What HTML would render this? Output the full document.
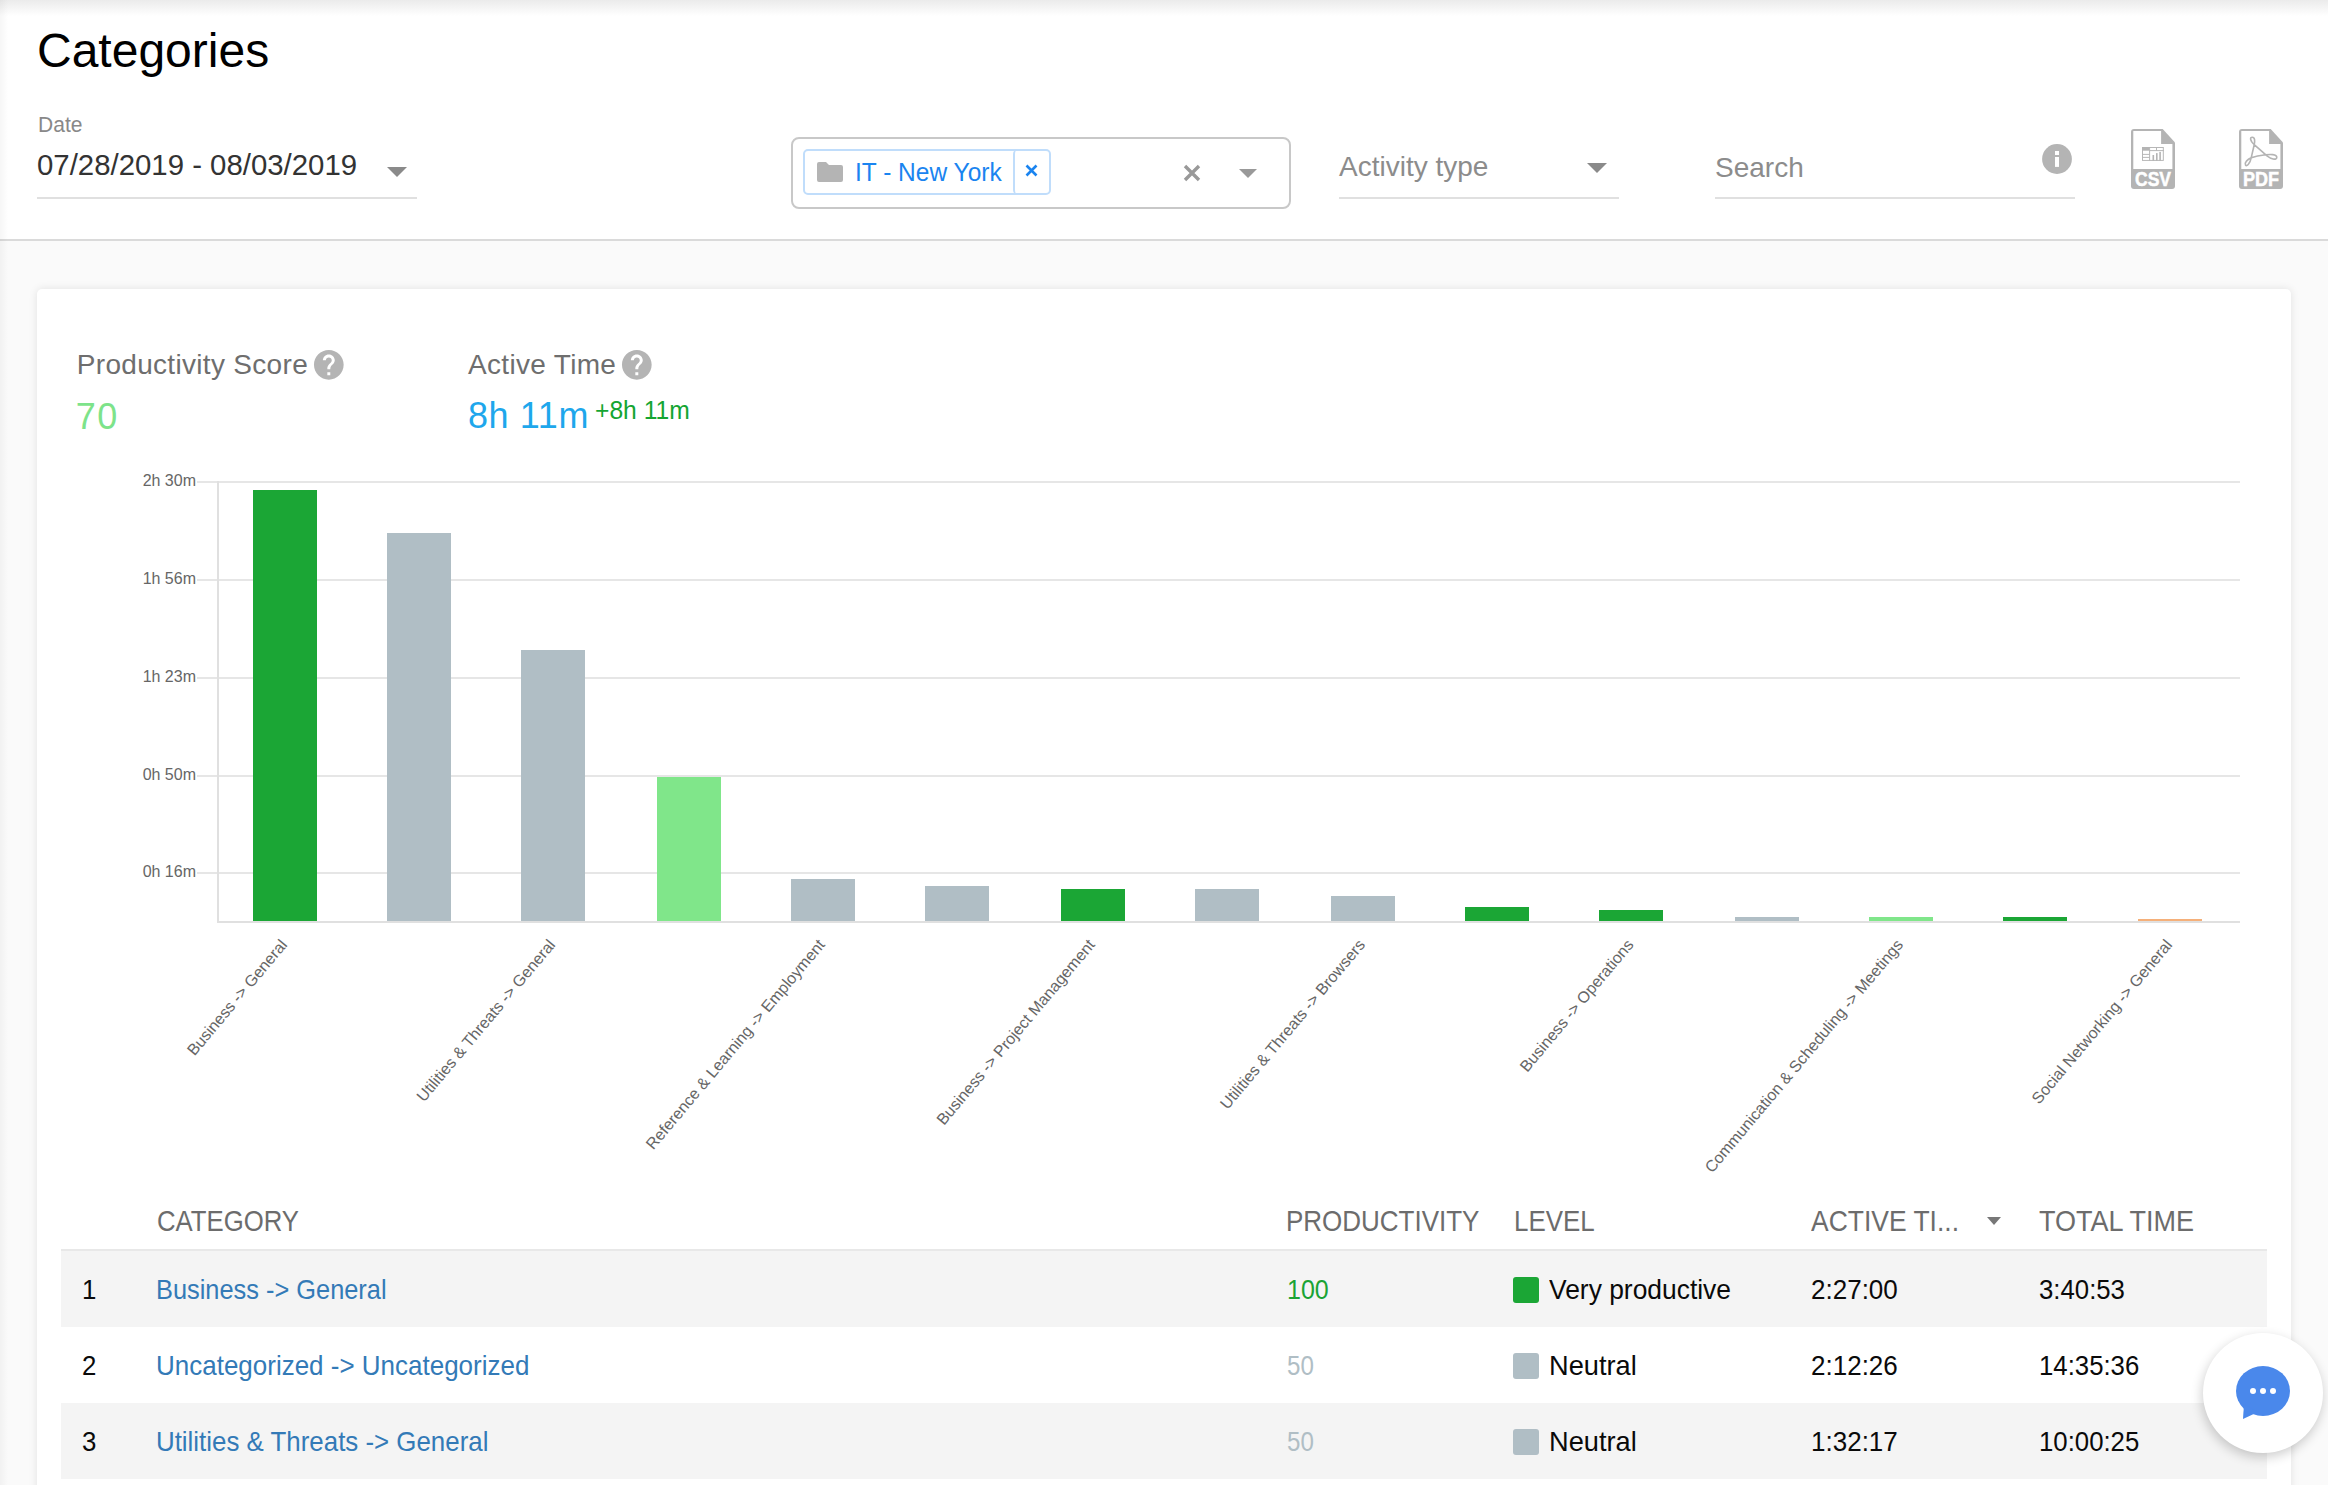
<!DOCTYPE html>
<html><head><meta charset="utf-8">
<style>
*{box-sizing:border-box;margin:0;padding:0}
html,body{width:2328px;height:1485px;overflow:hidden}
body{background:#fafafa;font-family:"Liberation Sans",sans-serif;position:relative}
.a{position:absolute;white-space:nowrap;line-height:1}
#hdr{position:absolute;left:0;top:0;width:2328px;height:241px;background:#fff;border-bottom:2px solid #dadada}
#topsh{position:absolute;left:0;top:0;width:2328px;height:16px;background:linear-gradient(#ebebeb,rgba(255,255,255,0))}
#leftsh{position:absolute;left:0;top:0;width:8px;height:1485px;background:linear-gradient(90deg,rgba(0,0,0,0.035),rgba(0,0,0,0))}
#card{position:absolute;left:37px;top:289px;width:2254px;height:1300px;background:#fff;border-radius:5px;box-shadow:0 0 8px rgba(0,0,0,0.1)}
.uline{position:absolute;height:2px;background:#e0e0e0}
.caret{position:absolute;width:0;height:0;border-left:10px solid transparent;border-right:10px solid transparent;border-top:10px solid #8a8a8a}
.q{position:absolute;width:30px;height:30px;border-radius:50%;background:#b4b4b4;color:#fff;font-size:24px;font-weight:bold;line-height:30px;text-align:center}
.grid{position:absolute;left:197px;width:2043px;height:2px;background:#e6e6e6}
.yl{position:absolute;right:2132px;font-size:16px;line-height:16px;color:#666;white-space:nowrap}
.bar{position:absolute;width:64px}
.g{background:#1ba635}.n{background:#b0bec5}.l{background:#80e68a}.o{background:#f5b07a}
.xl{position:absolute;top:932.46px;font-size:16px;line-height:16px;color:#666;white-space:nowrap;transform-origin:100% 13.54px;transform:rotate(-50deg)}
.row{position:absolute;left:61px;width:2206px;height:76px}
.sq{position:absolute;left:1513px;width:26px;height:26px;border-radius:3px}
</style></head>
<body>
<div id="hdr">
<div class="a" style="left:37px;top:27.07px;font-size:48px;color:#000;">Categories</div>
<div class="a" style="left:38px;top:114.08px;font-size:22px;color:#888;transform:scaleX(0.9560);transform-origin:0 0;">Date</div>
<div class="a" style="left:36.8px;top:150.75px;font-size:29px;color:#333;transform:scaleX(1.0128);transform-origin:0 0;">07/28/2019 - 08/03/2019</div>
<div class="caret" style="left:387px;top:167px"></div>
<div class="uline" style="left:37px;top:197px;width:380px"></div>
<div class="a" style="left:791px;top:137px;width:500px;height:72px;border:2px solid #c8c8c8;border-radius:8px"></div>
<div class="a" style="left:803px;top:149px;width:248px;height:46px;border:2px solid #c0ddfb;border-radius:5px"></div>
<div class="a" style="left:1013px;top:149px;width:8px;height:46px;border-left:2px solid #c0ddfb;border-radius:5px 0 0 5px"></div>
<svg class="a" style="left:817px;top:161px" width="26" height="22" viewBox="0 0 26 22"><path d="M2 1h7l3 3h12a2 2 0 0 1 2 2v13a2 2 0 0 1-2 2H2a2 2 0 0 1-2-2V3a2 2 0 0 1 2-2z" fill="#b4b4b4"/></svg>
<div class="a" style="left:855px;top:159.07px;font-size:26.5px;color:#1a84f0;transform:scaleX(0.9250);transform-origin:0 0;">IT - New York</div>
<svg class="a" style="left:1025px;top:164px" width="13" height="13" viewBox="0 0 13 13"><path d="M1.5 1.5l10 10M11.5 1.5l-10 10" stroke="#1a84f0" stroke-width="2.6"/></svg>
<svg class="a" style="left:1183px;top:164px" width="18" height="18" viewBox="0 0 18 18"><path d="M2 2l14 14M16 2L2 16" stroke="#999" stroke-width="3.4"/></svg>
<div class="caret" style="left:1239px;top:169px;border-top-color:#999;border-left-width:9.7px;border-right-width:9.7px;border-top-width:9.7px"></div>
<div class="a" style="left:1339px;top:153.40px;font-size:28px;color:#8c8c8c;">Activity type</div>
<div class="caret" style="left:1587px;top:163px"></div>
<div class="uline" style="left:1339px;top:197px;width:280px"></div>
<div class="a" style="left:1715px;top:153.50px;font-size:28px;color:#8c8c8c;">Search</div>
<div class="uline" style="left:1715px;top:197px;width:360px"></div>
<svg class="a" style="left:2042px;top:144px" width="30" height="30" viewBox="-15 -15 30 30"><circle r="14.9" fill="#b4b4b4"/><rect x="-2" y="-8" width="4" height="4" fill="#fff"/><rect x="-2" y="-2" width="4" height="9.9" fill="#fff"/></svg>
<svg class="a" style="left:2131px;top:129px" width="44" height="60" viewBox="0 0 44 60"><path d="M3 0h28.7l12.3 13.4V57a3 3 0 0 1-3 3H3a3 3 0 0 1-3-3V3a3 3 0 0 1 3-3z" fill="#b4b4b4"/><path d="M2.3 2h27.8v13h11.3v24.9H2.3z" fill="#fff"/>
<g fill="none" stroke="#b4b4b4" stroke-width="0.95"><rect x="11.5" y="18.5" width="20.8" height="12.9"/><path d="M18.6 18v13.8M18.6 21.6H32.8M25.5 18v3.6M11.1 25.4h7.5M11.1 28.4h7.5"/></g><g fill="#b4b4b4"><rect x="11.1" y="18" width="7.3" height="3.7"/><rect x="21.5" y="26" width="1.6" height="5.8"/><rect x="25" y="24.1" width="1.6" height="7.7"/><rect x="28.3" y="22.9" width="1.6" height="8.9"/></g>
<text x="4" y="56.5" font-family="Liberation Sans" font-weight="bold" font-size="20" fill="#fff" stroke="#fff" stroke-width="0.5" textLength="36" lengthAdjust="spacingAndGlyphs">CSV</text></svg>
<svg class="a" style="left:2239px;top:129px" width="44" height="60" viewBox="0 0 44 60"><path d="M3 0h28.7l12.3 13.4V57a3 3 0 0 1-3 3H3a3 3 0 0 1-3-3V3a3 3 0 0 1 3-3z" fill="#b4b4b4"/><path d="M2.3 2h27.8v13h11.3v24.9H2.3z" fill="#fff"/>
<path d="M15.2 15.7C16 12 16 8.2 13.3 8.2C10.6 8.2 11 11.8 15.2 15.7L28 26.8C31.5 29.5 37.8 32 37.8 28.3C37.8 25 31 25.3 26.5 25.8C21 26.4 15.5 27.6 12.2 28.8C8.5 30.5 5.2 33.5 6.5 36C7.8 38 11 34.5 12.2 28.8L15.2 15.7" fill="none" stroke="#b4b4b4" stroke-width="1.6" stroke-linejoin="round"/>
<text x="4" y="56.5" font-family="Liberation Sans" font-weight="bold" font-size="20" fill="#fff" stroke="#fff" stroke-width="0.5" textLength="36" lengthAdjust="spacingAndGlyphs">PDF</text></svg>
</div>
<div id="topsh"></div><div id="leftsh"></div><div id="card"></div>
<div class="a" style="left:76.8px;top:351.40px;font-size:28px;color:#6e6e6e;letter-spacing:0.31px;">Productivity Score</div>
<svg class="a" style="left:311.18px;top:347.18px" width="35.64" height="35.64" viewBox="0 0 24 24"><path d="M12 2C6.48 2 2 6.48 2 12s4.48 10 10 10 10-4.48 10-10S17.52 2 12 2zm1 17h-2v-2h2v2zm2.07-7.75l-.9.92C13.45 12.9 13 13.5 13 15h-2v-.5c0-1.1.45-2.1 1.17-2.83l1.24-1.26c.37-.36.59-.86.59-1.41 0-1.1-.9-2-2-2s-2 .9-2 2H8c0-2.21 1.79-4 4-4s4 1.79 4 4c0 .88-.36 1.68-.93 2.25z" fill="#b4b4b4"/></svg>
<div class="a" style="left:75.8px;top:398.53px;font-size:36px;color:#7de38a;letter-spacing:1.5px;">70</div>
<div class="a" style="left:468px;top:351.30px;font-size:28px;color:#6e6e6e;letter-spacing:0.32px;">Active Time</div>
<svg class="a" style="left:619.18px;top:347.18px" width="35.64" height="35.64" viewBox="0 0 24 24"><path d="M12 2C6.48 2 2 6.48 2 12s4.48 10 10 10 10-4.48 10-10S17.52 2 12 2zm1 17h-2v-2h2v2zm2.07-7.75l-.9.92C13.45 12.9 13 13.5 13 15h-2v-.5c0-1.1.45-2.1 1.17-2.83l1.24-1.26c.37-.36.59-.86.59-1.41 0-1.1-.9-2-2-2s-2 .9-2 2H8c0-2.21 1.79-4 4-4s4 1.79 4 4c0 .88-.36 1.68-.93 2.25z" fill="#b4b4b4"/></svg>
<div class="a" style="left:468px;top:398.43px;font-size:36px;color:#1ea7ec;letter-spacing:0.6px;">8h 11m</div>
<div class="a" style="left:594.6px;top:397.49px;font-size:26px;color:#14a532;transform:scaleX(0.9480);transform-origin:0 0;">+8h 11m</div>
<div class="grid" style="top:481px"></div>
<div class="grid" style="top:579px"></div>
<div class="grid" style="top:677px"></div>
<div class="grid" style="top:775px"></div>
<div class="grid" style="top:872px"></div>
<div class="a" style="left:217px;top:481px;width:2px;height:442px;background:#e0e0e0"></div>
<div class="a" style="left:217px;top:921px;width:2023px;height:2px;background:#e0e0e0"></div>
<div class="yl" style="top:473.46px">2h 30m</div>
<div class="yl" style="top:571.46px">1h 56m</div>
<div class="yl" style="top:669.46px">1h 23m</div>
<div class="yl" style="top:767.46px">0h 50m</div>
<div class="yl" style="top:864.46px">0h 16m</div>
<div class="bar g" style="left:253px;top:490px;height:431px"></div>
<div class="bar n" style="left:387px;top:532.5px;height:388.5px"></div>
<div class="bar n" style="left:521px;top:650px;height:271px"></div>
<div class="bar l" style="left:657px;top:777px;height:144px"></div>
<div class="bar n" style="left:791px;top:879px;height:42px"></div>
<div class="bar n" style="left:925px;top:885.5px;height:35.5px"></div>
<div class="bar g" style="left:1061px;top:889px;height:32px"></div>
<div class="bar n" style="left:1195px;top:889px;height:32px"></div>
<div class="bar n" style="left:1331px;top:895.5px;height:25.5px"></div>
<div class="bar g" style="left:1465px;top:907px;height:14px"></div>
<div class="bar g" style="left:1599px;top:910px;height:11px"></div>
<div class="bar n" style="left:1735px;top:917px;height:4px"></div>
<div class="bar l" style="left:1869px;top:917px;height:4px"></div>
<div class="bar g" style="left:2003px;top:917px;height:4px"></div>
<div class="bar o" style="left:2138px;top:919px;height:2px"></div>
<div class="xl" style="right:2039.5px">Business -&gt; General</div>
<div class="xl" style="right:1771.5px">Utilities &amp; Threats -&gt; General</div>
<div class="xl" style="right:1501.5px">Reference &amp; Learning -&gt; Employment</div>
<div class="xl" style="right:1231.5px">Business -&gt; Project Management</div>
<div class="xl" style="right:961.5px">Utilities &amp; Threats -&gt; Browsers</div>
<div class="xl" style="right:693.5px">Business -&gt; Operations</div>
<div class="xl" style="right:423.5px">Communication &amp; Scheduling -&gt; Meetings</div>
<div class="xl" style="right:154.5px">Social Networking -&gt; General</div>
<div class="a" style="left:156.5px;top:1206.85px;font-size:29px;color:#6c6c6c;transform:scaleX(0.8863);transform-origin:0 0;">CATEGORY</div>
<div class="a" style="left:1285.8px;top:1206.95px;font-size:29px;color:#6c6c6c;transform:scaleX(0.8960);transform-origin:0 0;">PRODUCTIVITY</div>
<div class="a" style="left:1513.5px;top:1206.95px;font-size:29px;color:#6c6c6c;transform:scaleX(0.8931);transform-origin:0 0;">LEVEL</div>
<div class="a" style="left:1811px;top:1206.75px;font-size:29px;color:#6c6c6c;transform:scaleX(0.9124);transform-origin:0 0;">ACTIVE TI...</div>
<div class="a" style="left:1987px;top:1217px;width:0;height:0;border-left:7.5px solid transparent;border-right:7.5px solid transparent;border-top:8px solid #777"></div>
<div class="a" style="left:2039px;top:1206.75px;font-size:29px;color:#6c6c6c;transform:scaleX(0.9317);transform-origin:0 0;">TOTAL TIME</div>
<div class="a" style="left:61px;top:1249px;width:2206px;height:2px;background:#e8e8e8"></div>
<div class="row" style="top:1251px;background:#f4f4f4"></div>
<div class="row" style="top:1403px;background:#f4f4f4"></div>
<div class="a" style="left:82px;top:1275.60px;font-size:28px;color:#0a0a0a;transform:scaleX(0.9230);transform-origin:0 0;">1</div>
<div class="a" style="left:156px;top:1275.60px;font-size:28px;color:#337ab7;transform:scaleX(0.9060);transform-origin:0 0;">Business -&gt; General</div>
<div class="a" style="left:1287.3px;top:1275.60px;font-size:28px;color:#1aa334;transform:scaleX(0.8928);transform-origin:0 0;">100</div>
<div class="sq" style="top:1277px;background:#1ba635"></div>
<div class="a" style="left:1549px;top:1275.60px;font-size:28px;color:#0a0a0a;transform:scaleX(0.9430);transform-origin:0 0;">Very productive</div>
<div class="a" style="left:1811px;top:1275.60px;font-size:28px;color:#0a0a0a;transform:scaleX(0.9290);transform-origin:0 0;">2:27:00</div>
<div class="a" style="left:2039px;top:1275.60px;font-size:28px;color:#0a0a0a;transform:scaleX(0.9200);transform-origin:0 0;">3:40:53</div>
<div class="a" style="left:82px;top:1351.60px;font-size:28px;color:#0a0a0a;transform:scaleX(0.9230);transform-origin:0 0;">2</div>
<div class="a" style="left:156px;top:1351.60px;font-size:28px;color:#337ab7;transform:scaleX(0.9280);transform-origin:0 0;">Uncategorized -&gt; Uncategorized</div>
<div class="a" style="left:1287.3px;top:1351.60px;font-size:28px;color:#b0bec5;transform:scaleX(0.8614);transform-origin:0 0;">50</div>
<div class="sq" style="top:1353px;background:#b0bec5"></div>
<div class="a" style="left:1549px;top:1351.60px;font-size:28px;color:#0a0a0a;transform:scaleX(0.9720);transform-origin:0 0;">Neutral</div>
<div class="a" style="left:1811px;top:1351.60px;font-size:28px;color:#0a0a0a;transform:scaleX(0.9290);transform-origin:0 0;">2:12:26</div>
<div class="a" style="left:2039px;top:1351.60px;font-size:28px;color:#0a0a0a;transform:scaleX(0.9200);transform-origin:0 0;">14:35:36</div>
<div class="a" style="left:82px;top:1427.60px;font-size:28px;color:#0a0a0a;transform:scaleX(0.9230);transform-origin:0 0;">3</div>
<div class="a" style="left:156px;top:1427.60px;font-size:28px;color:#337ab7;transform:scaleX(0.9240);transform-origin:0 0;">Utilities &amp; Threats -&gt; General</div>
<div class="a" style="left:1287.3px;top:1427.60px;font-size:28px;color:#b0bec5;transform:scaleX(0.8614);transform-origin:0 0;">50</div>
<div class="sq" style="top:1429px;background:#b0bec5"></div>
<div class="a" style="left:1549px;top:1427.60px;font-size:28px;color:#0a0a0a;transform:scaleX(0.9720);transform-origin:0 0;">Neutral</div>
<div class="a" style="left:1811px;top:1427.60px;font-size:28px;color:#0a0a0a;transform:scaleX(0.9290);transform-origin:0 0;">1:32:17</div>
<div class="a" style="left:2039px;top:1427.60px;font-size:28px;color:#0a0a0a;transform:scaleX(0.9200);transform-origin:0 0;">10:00:25</div>
<div class="a" style="left:2203px;top:1333px;width:120px;height:120px;border-radius:50%;background:#fff;box-shadow:-1px 4px 12px rgba(0,0,0,0.2)"></div>
<svg class="a" style="left:2234px;top:1364px" width="58" height="58" viewBox="0 0 58 58">
<ellipse cx="29" cy="27" rx="27" ry="25" fill="#4a88eb"/><path d="M10 40L9 55L24 48z" fill="#4a88eb"/>
<circle cx="19" cy="27" r="3" fill="#fff"/><circle cx="29" cy="27" r="3" fill="#fff"/><circle cx="39" cy="27" r="3" fill="#fff"/></svg>
</body></html>
